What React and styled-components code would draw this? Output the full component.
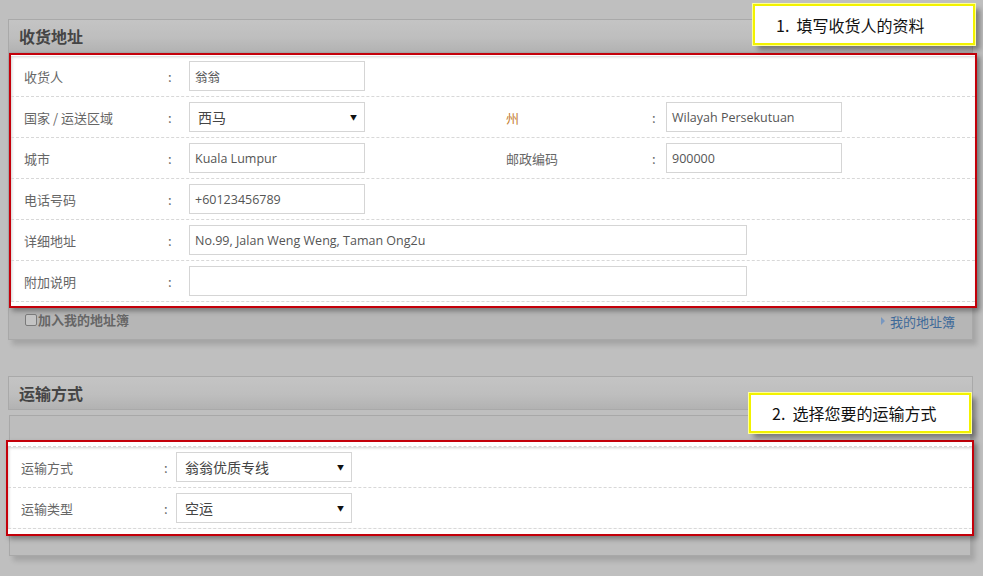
import React from "react";
import styled, { createGlobalStyle } from "styled-components";

const GlobalStyle = createGlobalStyle`
  html, body {
    margin: 0;
    padding: 0;
    background: #bfbfbf;
  }
  body {
    font-family: "Open Sans", "Noto Sans CJK SC", sans-serif;
  }
`;

const Page = styled.div`
  position: relative;
  width: 965px;
  padding: 19px 10px 20px 8px;
`;

const Header = styled.div`
  height: 32px;
  display: flex;
  align-items: center;
  padding-left: 10px;
  border: 1px solid #a9a9a9;
  background: linear-gradient(#c4c4c4, #bebebe 55%, #b2b2b2);
  margin-bottom: ${(p) => p.$gap || 0}px;
`;

const Title = styled.h3`
  margin: 0;
  font-family: "Noto Sans CJK SC", sans-serif;
  font-size: 16px;
  font-weight: 700;
  color: #454545;
`;

const Body = styled.div`
  background: ${(p) => p.$bg};
  border: 1px solid #a8a8a8;
  border-top: ${(p) => (p.$noTop ? "none" : "1px solid #a8a8a8")};
  margin: ${(p) => p.$margin || "0"};
  padding: ${(p) => p.$padding || "0"};
  box-shadow: 4px 5px 5px rgba(0, 0, 0, 0.14);
`;

const Highlight = styled.div`
  border: 2px solid #c4000a;
  background: #fff;
  margin: ${(p) => p.$margin};
  padding: ${(p) => p.$padding};
  box-shadow: 3px 3px 5px rgba(0, 0, 0, 0.35);
`;

const Inner = styled.div`
  box-shadow: inset 1px 1px 3px rgba(0, 0, 0, 0.18);
  border-top: ${(p) => (p.$dashTop ? "1px dashed #d6d6d6" : "none")};
`;

const Row = styled.div`
  display: grid;
  grid-template-columns: ${(p) => p.$cols};
  align-items: center;
  height: 40px;
  padding-left: 13px;
  border-bottom: 1px dashed #d8d8d8;
`;

const Label = styled.span`
  font-family: "Noto Sans CJK SC", sans-serif;
  font-size: 13px;
  color: ${(p) => (p.$accent ? "#c27a2c" : "#666")};
`;

const Colon = styled.span`
  font-family: "Noto Sans CJK SC", sans-serif;
  font-size: 13px;
  color: #666;
`;

const Field = styled.div`
  box-sizing: border-box;
  width: ${(p) => p.$w || 176}px;
  height: 30px;
  border: 1px solid #d5d5d5;
  background: #fff;
  display: flex;
  align-items: center;
  padding-left: 5px;
  font-family: "Open Sans", "Noto Sans CJK SC", sans-serif;
  font-size: 12.5px;
  color: #555;
`;

const Select = styled(Field)`
  justify-content: space-between;
  padding: 0 7px 0 8px;
  font-family: "Noto Sans CJK SC", sans-serif;
  font-size: 14px;
  color: #444;
`;

const Arrow = styled.span`
  font-size: 7px;
  color: #111;
`;

const Footer = styled.div`
  box-sizing: border-box;
  height: 31px;
  display: flex;
  align-items: center;
  justify-content: space-between;
  padding: 0 17px 5px 16px;
`;

const Check = styled.label`
  display: flex;
  align-items: center;
  font-family: "Noto Sans CJK SC", sans-serif;
  font-size: 13px;
  font-weight: 600;
  color: #666;
  margin-top: -3px;
`;

const Box = styled.span`
  width: 10px;
  height: 10px;
  border: 1px solid #7a7a7a;
  border-radius: 2px;
  background: #c4c4c4;
  margin-right: 1px;
`;

const Link = styled.a`
  display: flex;
  align-items: center;
  gap: 5px;
  font-family: "Noto Sans CJK SC", sans-serif;
  font-size: 13px;
  color: #3f6a99;
  text-decoration: none;
`;

const Tri = styled.span`
  width: 0;
  height: 0;
  border-top: 4px solid transparent;
  border-bottom: 4px solid transparent;
  border-left: 4px solid #7897c0;
`;

const Callout = styled.div`
  position: absolute;
  left: ${(p) => p.$x}px;
  top: ${(p) => p.$y}px;
  box-sizing: border-box;
  width: 222px;
  height: ${(p) => p.$h}px;
  border: 2px solid #f2f200;
  outline: 1px solid #ffff99;
  background: #fff;
  box-shadow: 5px 5px 5px rgba(0, 0, 0, 0.35);
  display: flex;
  align-items: center;
  padding-left: 21px;
  font-family: "Noto Sans CJK SC", sans-serif;
  font-size: 16px;
  color: #111;
  white-space: pre;
`;

const addressCols = "144px 21px 317px 146px 14px auto";
const shipCols = "143px 12px auto";

const Input = ({ value, w }) => <Field $w={w}>{value}</Field>;

const Dropdown = ({ value }) => (
  <Select>
    <span>{value}</span>
    <Arrow>▼</Arrow>
  </Select>
);

export default function App() {
  return (
    <>
      <GlobalStyle />
      <Page>
        <Header>
          <Title>收货地址</Title>
        </Header>
        <Body $bg="#b6b6b6" $noTop>
          <Highlight $margin="0 -5px 0 0" $padding="1px 0 4px">
            <Inner>
              <Row $cols={addressCols}>
                <Label>收货人</Label>
                <Colon>:</Colon>
                <Input value="翁翁" />
              </Row>
              <Row $cols={addressCols}>
                <Label>国家 / 运送区域</Label>
                <Colon>:</Colon>
                <Dropdown value="西马" />
                <Label $accent>州</Label>
                <Colon>:</Colon>
                <Input value="Wilayah Persekutuan" />
              </Row>
              <Row $cols={addressCols}>
                <Label>城市</Label>
                <Colon>:</Colon>
                <Input value="Kuala Lumpur" />
                <Label>邮政编码</Label>
                <Colon>:</Colon>
                <Input value="900000" />
              </Row>
              <Row $cols={addressCols}>
                <Label>电话号码</Label>
                <Colon>:</Colon>
                <Input value="+60123456789" />
              </Row>
              <Row $cols="144px 21px auto">
                <Label>详细地址</Label>
                <Colon>:</Colon>
                <Input w={558} value="No.99, Jalan Weng Weng, Taman Ong2u" />
              </Row>
              <Row $cols="144px 21px auto">
                <Label>附加说明</Label>
                <Colon>:</Colon>
                <Input w={558} value="" />
              </Row>
            </Inner>
          </Highlight>
          <Footer>
            <Check>
              <Box />
              加入我的地址簿
            </Check>
            <Link href="#">
              <Tri />
              我的地址簿
            </Link>
          </Footer>
        </Body>

        <div style={{ height: 36 }} />

        <Header $gap={5}>
          <Title>运输方式</Title>
        </Header>
        <Body $bg="#bdbdbd" $margin="0 2px 0 1px" $padding="24px 0 19px">
          <Highlight $margin="0 -4px 0 -4px" $padding="4px 0 5px">
            <Inner $dashTop>
              <Row $cols={shipCols}>
                <Label>运输方式</Label>
                <Colon>:</Colon>
                <Dropdown value="翁翁优质专线" />
              </Row>
              <Row $cols={shipCols}>
                <Label>运输类型</Label>
                <Colon>:</Colon>
                <Dropdown value="空运" />
              </Row>
            </Inner>
          </Highlight>
        </Body>

        <Callout $x={753} $y={4} $h={41}>
          {"1.  填写收货人的资料"}
        </Callout>
        <Callout $x={749} $y={393} $h={40}>
          {"2.  选择您要的运输方式"}
        </Callout>
      </Page>
    </>
  );
}
